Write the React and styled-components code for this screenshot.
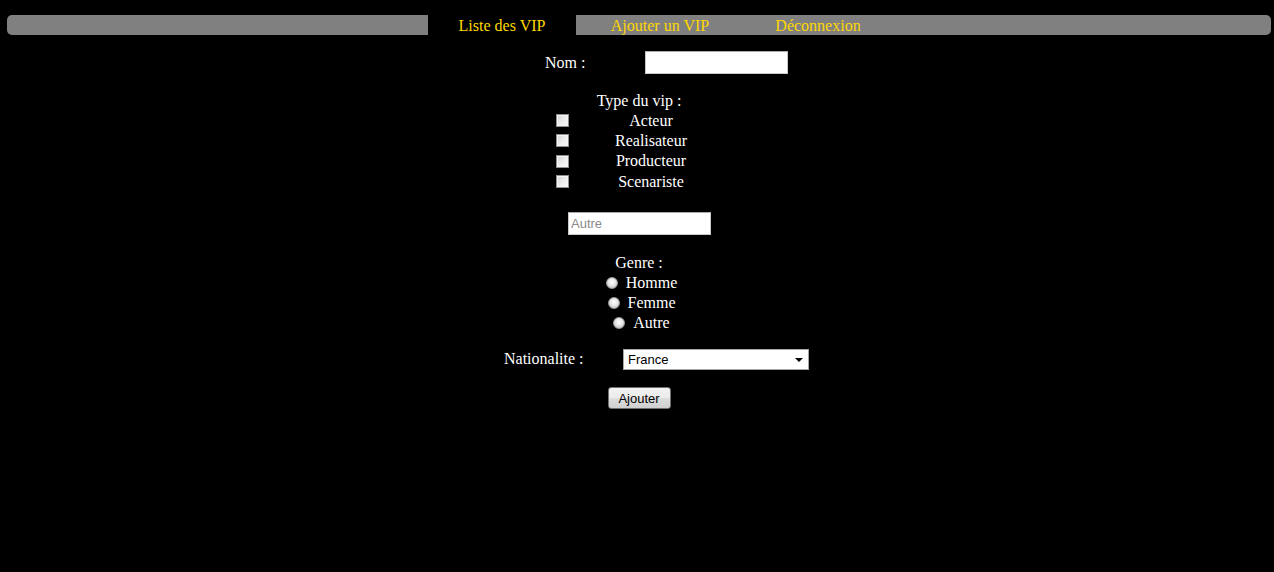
import React from "react";
import styled, { createGlobalStyle } from "styled-components";

const GlobalStyle = createGlobalStyle`
  html, body {
    margin: 0;
    padding: 0;
    background: #000;
  }
  body {
    font-family: "Liberation Serif", "Times New Roman", serif;
    font-size: 16px;
    color: #fff;
  }
`;

const Page = styled.div`
  min-height: 572px;
  padding: 15px 3px 0 7px;
  box-sizing: border-box;
`;

const NavBar = styled.nav`
  height: 20px;
  background: #808080;
  border-radius: 5px;
  display: flex;
  padding-left: 421px;
`;

const Tab = styled.a`
  width: 148px;
  height: 20px;
  box-sizing: border-box;
  margin-right: 10px;
  padding-top: 2px;
  text-align: center;
  line-height: 18px;
  color: #ffd700;
  text-decoration: none;
  cursor: pointer;
  background: ${(p) => (p.$active ? "#000" : "transparent")};
`;

const Form = styled.form`
  display: flex;
  flex-direction: column;
  margin-left: -7px;
  margin-right: -3px;
`;

const Row = styled.div`
  display: flex;
  justify-content: center;
  align-items: center;
  padding-left: ${(p) => p.$shift || 0}px;
  margin-top: ${(p) => p.$top || 0}px;
`;

const Label = styled.label`
  width: ${(p) => p.$width}px;
  line-height: 18.4px;
  padding-top: 1px;
`;

const TextInput = styled.input`
  width: 143px;
  height: 23px;
  box-sizing: border-box;
  border: 1px solid #c8c8c8;
  border-top-color: #a9a9a9;
  background: #fff;
  padding: 1px 2px;
  font-family: "Liberation Sans", Arial, sans-serif;
  font-size: 13px;
  outline: none;
  &::placeholder {
    color: #8a8a8a;
  }
`;

const Heading = styled.div`
  text-align: center;
  line-height: 18.4px;
  padding-left: 4px;
  margin-top: ${(p) => p.$top}px;
`;

const CheckGrid = styled.div`
  display: grid;
  grid-template-columns: 28px 140px;
  grid-auto-rows: 20.4px;
  align-items: center;
  justify-content: center;
`;

const CheckBox = styled.input.attrs({ type: "checkbox" })`
  appearance: none;
  width: 13px;
  height: 13px;
  margin: 0 0 0 3px;
  box-sizing: border-box;
  border: 1px solid #8f8f8f;
  background: linear-gradient(135deg, #d2d2d2 0%, #ececec 50%, #fafafa 100%);
  box-shadow: inset 0 0 0 1px #f4f4f4;
`;

const CheckLabel = styled.span`
  text-align: center;
`;

const RadioList = styled.div`
  display: flex;
  flex-direction: column;
`;

const RadioRow = styled.label`
  height: 20.4px;
  display: flex;
  justify-content: center;
  align-items: center;
  gap: 8px;
  padding-left: 9px;
`;

const Radio = styled.input.attrs({ type: "radio" })`
  appearance: none;
  width: 12px;
  height: 12px;
  margin: 0;
  border-radius: 50%;
  border: 1px solid #9a9a9a;
  box-sizing: border-box;
  background: radial-gradient(circle at 50% 40%, #ffffff 0%, #e6e6e6 45%, #b4b4b4 100%);
`;

const SelectWrap = styled.div`
  position: relative;
  width: 186px;
  height: 21px;
  &::after {
    content: "";
    position: absolute;
    right: 6px;
    top: 9px;
    border-left: 4px solid transparent;
    border-right: 4px solid transparent;
    border-top: 4px solid #000;
    pointer-events: none;
  }
`;

const Select = styled.select`
  appearance: none;
  width: 100%;
  height: 100%;
  box-sizing: border-box;
  border: 1px solid #a5a5a5;
  background: #fff;
  padding: 1px 0 0 4px;
  font-family: "Liberation Sans", Arial, sans-serif;
  font-size: 13px;
  color: #000;
  outline: none;
`;

const Button = styled.button`
  width: 63px;
  height: 22px;
  box-sizing: border-box;
  border: 1px solid #707070;
  border-radius: 3px;
  background: linear-gradient(#f2f2f2 0%, #ebebeb 50%, #dddddd 51%, #cfcfcf 100%);
  font-family: "Liberation Sans", Arial, sans-serif;
  font-size: 13px;
  color: #000;
  padding: 1px 0 0;
`;

const types = ["Acteur", "Realisateur", "Producteur", "Scenariste"];
const genres = ["Homme", "Femme", "Autre"];

function App() {
  return (
    <Page>
      <GlobalStyle />
      <NavBar>
        <Tab $active>Liste des VIP</Tab>
        <Tab>Ajouter un VIP</Tab>
        <Tab>Déconnexion</Tab>
      </NavBar>
      <Form onSubmit={(e) => e.preventDefault()}>
        <Row $shift={59} $top={16}>
          <Label $width={100}>Nom :</Label>
          <TextInput type="text" />
        </Row>

        <Heading $top={18}>Type du vip :</Heading>
        <CheckGrid>
          {types.map((t) => (
            <React.Fragment key={t}>
              <CheckBox />
              <CheckLabel>{t}</CheckLabel>
            </React.Fragment>
          ))}
        </CheckGrid>

        <Row $shift={5} $top={20}>
          <TextInput type="text" placeholder="Autre" />
        </Row>

        <Heading $top={19}>Genre :</Heading>
        <RadioList>
          {genres.map((g) => (
            <RadioRow key={g}>
              <Radio name="genre" />
              {g}
            </RadioRow>
          ))}
        </RadioList>

        <Row $shift={39} $top={15}>
          <Label $width={119}>Nationalite :</Label>
          <SelectWrap>
            <Select defaultValue="France">
              <option>France</option>
            </Select>
          </SelectWrap>
        </Row>

        <Row $shift={4} $top={17}>
          <Button type="submit">Ajouter</Button>
        </Row>
      </Form>
    </Page>
  );
}

export default App;
